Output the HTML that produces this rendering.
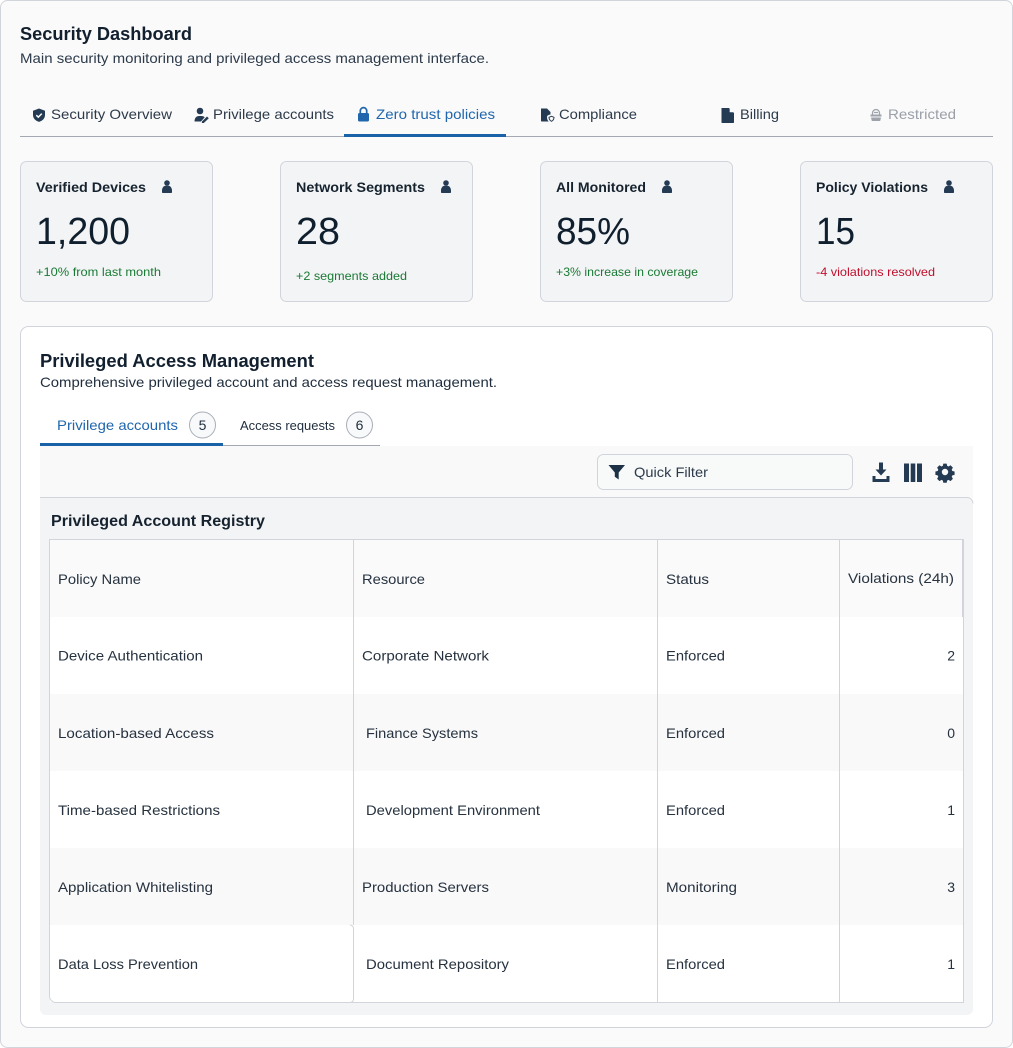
<!DOCTYPE html>
<html lang="en">
<head>
<meta charset="utf-8">
<title>Security Dashboard</title>
<style>
html,body{margin:0;padding:0;background:#fff;width:1013px;height:1048px;overflow:hidden}
svg{display:block}
text{font-family:"Liberation Sans",Arial,sans-serif;font-size:14px;fill:#1f2d3d}
.h1{font-size:18px;font-weight:700;fill:#111f2e}
.sub{fill:#2c3a4a}
.tab{fill:#2c3a4a}
.blue{fill:#1f66ad}
.ct{font-weight:700;fill:#16232f}
.val{font-size:38px;fill:#0f1f2e}
.note{font-size:12px}
.gr{fill:#1a7a34}
.rd{fill:#c20f2c}
.cell{fill:#26323f}
</style>
</head>
<body>
<svg width="1013" height="1048" viewBox="0 0 1013 1048" xmlns="http://www.w3.org/2000/svg">
<rect x="0.5" y="0.5" width="1012" height="1047" rx="7" fill="#fafafa" stroke="#d1d5db"/>

<text x="20" y="40" class="h1" lengthAdjust="spacingAndGlyphs" textLength="172">Security Dashboard</text>
<text x="20" y="63" class="sub" lengthAdjust="spacingAndGlyphs" textLength="469">Main security monitoring and privileged access management interface.</text>

<!-- tabs -->
<rect x="20" y="136" width="973" height="1" fill="#a3a8b3"/>
<rect x="344" y="134" width="162" height="3" fill="#1a62a8"/>
<path fill="#243b53" d="M39 108.500l6 2.200v4.200c0 3.600-2.600 5.900-6 7-3.400-1.100-6-3.400-6-7v-4.200z"/>
<path fill="none" stroke="#fafafa" stroke-width="1.500" d="M36.300 115.200l2 2 3.500-3.600"/>
<text x="51" y="119" class="tab" lengthAdjust="spacingAndGlyphs" textLength="121">Security Overview</text>
<circle cx="200" cy="111" r="3.300" fill="#243b53"/>
<path fill="#243b53" d="M194.500 121.500c0-3.700 2-5.500 4.500-5.500h2.500c1.500 0 2.500.5 3.200 1.300l-3.700 4.200z"/>
<path fill="#243b53" d="M202 121.500l5-5 1.800 1.800-5 4.700h-2z"/>
<text x="213" y="119" class="tab" lengthAdjust="spacingAndGlyphs" textLength="121">Privilege accounts</text>
<path fill="none" stroke="#1f66ad" stroke-width="1.700" d="M360.300 113v-2.200a3.200 3.200 0 0 1 6.400 0v2.200"/>
<rect x="358" y="113" width="11" height="8.500" rx="1.500" fill="#1f66ad"/>
<text x="376" y="119" class="tab blue" lengthAdjust="spacingAndGlyphs" textLength="119">Zero trust policies</text>
<path fill="#243b53" d="M541 108.500h6l3.500 3.500v2.500c-1.800.2-3.500 1-3.500 2.500 0 2 .5 3.500 1.700 4.500H541.800a.8.8 0 0 1-.8-.8z"/>
<path fill="none" stroke="#243b53" stroke-width="1" d="M551.500 116.300l2.500 1c0 2-1 3.300-2.500 4-1.500-.7-2.500-2-2.500-4z"/>
<text x="559" y="119" class="tab" lengthAdjust="spacingAndGlyphs" textLength="78">Compliance</text>
<path fill="#243b53" d="M721.500 108h7.500l5 5v9.200a.8.800 0 0 1-.8.800H722.300a.8.800 0 0 1-.8-.8z"/>
<path fill="#fafafa" d="M729.700 108l4.300 4.300h-4.300z"/>
<text x="740" y="119" class="tab" lengthAdjust="spacingAndGlyphs" textLength="39">Billing</text>
<path fill="none" stroke="#9ea3ab" stroke-width="1.300" d="M872.500 114.500v-1.500a3.500 3.500 0 0 1 7 0v1.500M874 112.500h4"/>
<rect x="870.500" y="114.500" width="11" height="2" fill="#9ea3ab"/>
<path fill="#9ea3ab" d="M871 117.500h10l-.8 3.500h-8.400z"/>
<text x="888" y="119" style="fill:#9a9fa8" lengthAdjust="spacingAndGlyphs" textLength="68">Restricted</text>

<!-- cards -->
<g fill="#f3f4f6" stroke="#d1d5db">
<rect x="20.500" y="161.500" width="192" height="140" rx="6"/>
<rect x="280.500" y="161.500" width="192" height="140" rx="6"/>
<rect x="540.500" y="161.500" width="192" height="140" rx="6"/>
<rect x="800.500" y="161.500" width="192" height="140" rx="6"/>
</g>
<defs>
<g id="u"><circle cx="5" cy="3" r="2.800" fill="#243b53"/><path d="M0 12.300v-1.800c0-2.600 1.800-4.700 3.500-4.700h3c1.700 0 3.500 2.100 3.500 4.700v1.800a.7.700 0 0 1-.7.700H.7a.7.700 0 0 1-.7-.7z" fill="#243b53"/></g>
</defs>
<text x="36" y="192" class="ct" lengthAdjust="spacingAndGlyphs" textLength="110">Verified Devices</text>
<use href="#u" x="162" y="180"/>
<text x="36" y="244" class="val" lengthAdjust="spacingAndGlyphs" textLength="94">1,200</text>
<text x="36" y="276" class="note gr" lengthAdjust="spacingAndGlyphs" textLength="125">+10% from last month</text>

<text x="296" y="192" class="ct" lengthAdjust="spacingAndGlyphs" textLength="129">Network Segments</text>
<use href="#u" x="441" y="180"/>
<text x="296" y="244" class="val" lengthAdjust="spacingAndGlyphs" textLength="44">28</text>
<text x="296" y="280" class="note gr" lengthAdjust="spacingAndGlyphs" textLength="111">+2 segments added</text>

<text x="556" y="192" class="ct" lengthAdjust="spacingAndGlyphs" textLength="90">All Monitored</text>
<use href="#u" x="662" y="180"/>
<text x="556" y="244" class="val" lengthAdjust="spacingAndGlyphs" textLength="74">85%</text>
<text x="556" y="276" class="note gr" lengthAdjust="spacingAndGlyphs" textLength="142">+3% increase in coverage</text>

<text x="816" y="192" class="ct" lengthAdjust="spacingAndGlyphs" textLength="112">Policy Violations</text>
<use href="#u" x="944" y="180"/>
<text x="816" y="244" class="val" lengthAdjust="spacingAndGlyphs" textLength="39">15</text>
<text x="816" y="276" class="note rd" lengthAdjust="spacingAndGlyphs" textLength="119">-4 violations resolved</text>

<!-- panel -->
<rect x="20.500" y="326.500" width="972" height="701" rx="8" fill="#fff" stroke="#d1d5db"/>
<text x="40" y="367" class="h1" lengthAdjust="spacingAndGlyphs" textLength="274">Privileged Access Management</text>
<text x="40" y="387" class="sub" style="fill:#1f2d3d" lengthAdjust="spacingAndGlyphs" textLength="457">Comprehensive privileged account and access request management.</text>

<rect x="223" y="445" width="157" height="1" fill="#a3a8b3"/>
<rect x="40" y="443" width="183" height="3" fill="#1a62a8"/>
<text x="57" y="430" class="blue" lengthAdjust="spacingAndGlyphs" textLength="121">Privilege accounts</text>
<circle cx="202.500" cy="425" r="13" fill="#f8f9fa" stroke="#a9aeb7"/>
<text x="202.500" y="430" text-anchor="middle">5</text>
<text x="240" y="430" style="font-size:12.500px" lengthAdjust="spacingAndGlyphs" textLength="95">Access requests</text>
<circle cx="359.500" cy="425" r="13" fill="#f8f9fa" stroke="#a9aeb7"/>
<text x="359.500" y="430" text-anchor="middle">6</text>

<!-- toolbar -->
<rect x="40" y="446" width="933" height="52" fill="#f9f9fa"/>
<rect x="597.500" y="454.500" width="255" height="35" rx="6" fill="#f8f9f9" stroke="#d1d5db"/>
<path fill="#1d3247" d="M608.500 465h16.500l-6.300 7.500v7l-3.900 -2.800v-4.200z"/>
<text x="634" y="477" lengthAdjust="spacingAndGlyphs" textLength="74" style="fill:#2c3a4a">Quick Filter</text>
<path fill="#243b53" d="M879 462.500h4v7h3.500l-5.500 6-5.500-6h3.500z"/>
<path fill="#243b53" d="M872.500 476h3v3h11v-3h3v6h-17z"/>
<path fill="#243b53" d="M904 463.500h5v18.500h-5zM910.700 463.500h4.600v18.500h-4.600zM917 463.500h5v18.500h-5z"/>
<g transform="translate(945 472) scale(.84) translate(-945 -472)">
<path fill="#243b53" fill-rule="evenodd" d="M943 462h4l.6 2.700 1.600.7 2.400-1.400 2.800 2.800-1.400 2.400.7 1.600 2.700.6v4l-2.700.6-.7 1.600 1.400 2.400-2.800 2.800-2.400-1.400-1.600.7-.6 2.700h-4l-.6-2.700-1.600-.7-2.400 1.400-2.800-2.800 1.400-2.400-.7-1.600-2.700-.6v-4l2.700-.6.7-1.600-1.400-2.400 2.800-2.800 2.400 1.400 1.600-.7zM945 468.200a3.800 3.800 0 1 0 0 7.600 3.800 3.800 0 0 0 0-7.600z"/>
</g>

<!-- registry -->
<path fill="#f3f4f6" d="M40 497.500H967a6 6 0 0 1 6 6V1009a6 6 0 0 1-6 6H46a6 6 0 0 1-6-6z"/>
<path fill="none" stroke="#d1d5db" d="M40 497.500H967a6 6 0 0 1 6 6"/>
<text x="51" y="526" class="ct" style="font-size:16px" lengthAdjust="spacingAndGlyphs" textLength="214">Privileged Account Registry</text>

<!-- table -->
<rect x="50" y="540" width="914" height="77" fill="#fafafa"/>
<rect x="50" y="617" width="914" height="77" fill="#fff"/>
<rect x="50" y="694" width="914" height="77" fill="#f9f9fa"/>
<rect x="50" y="771" width="914" height="77" fill="#fff"/>
<rect x="50" y="848" width="914" height="77" fill="#f9f9fa"/>
<rect x="50" y="925" width="914" height="77" fill="#fff"/>
<path fill="none" stroke="#d1d5db" d="M49.500 996V539.500H963.500V1002.500H56a6.500 6.500 0 0 1-6.500-6.500z"/>
<rect x="962" y="540" width="2" height="77" fill="#d1d5db"/>
<path fill="none" stroke="#d1d5db" d="M353.500 540V925M657.500 540V1002M839.500 540V1002"/>
<path fill="none" stroke="#d1d5db" d="M350 925a3.500 3.500 0 0 1 3.500 3.500V999a3.500 3.500 0 0 1-3.500 3.500"/>

<text x="58" y="584" class="cell" lengthAdjust="spacingAndGlyphs" textLength="83">Policy Name</text>
<text x="362" y="584" class="cell" lengthAdjust="spacingAndGlyphs" textLength="63">Resource</text>
<text x="666" y="584" class="cell" lengthAdjust="spacingAndGlyphs" textLength="43">Status</text>
<text x="848" y="583" class="cell" lengthAdjust="spacingAndGlyphs" textLength="106">Violations (24h)</text>

<text x="58" y="660.500" class="cell" lengthAdjust="spacingAndGlyphs" textLength="145">Device Authentication</text>
<text x="362" y="660.500" class="cell" lengthAdjust="spacingAndGlyphs" textLength="127">Corporate Network</text>
<text x="666" y="660.500" class="cell" lengthAdjust="spacingAndGlyphs" textLength="59">Enforced</text>
<text x="955" y="660.500" class="cell" text-anchor="end">2</text>

<text x="58" y="738" class="cell" lengthAdjust="spacingAndGlyphs" textLength="156">Location-based Access</text>
<text x="366" y="738" class="cell" lengthAdjust="spacingAndGlyphs" textLength="112">Finance Systems</text>
<text x="666" y="738" class="cell" lengthAdjust="spacingAndGlyphs" textLength="59">Enforced</text>
<text x="955" y="738" class="cell" text-anchor="end">0</text>

<text x="58" y="815" class="cell" lengthAdjust="spacingAndGlyphs" textLength="162">Time-based Restrictions</text>
<text x="366" y="815" class="cell" lengthAdjust="spacingAndGlyphs" textLength="174">Development Environment</text>
<text x="666" y="815" class="cell" lengthAdjust="spacingAndGlyphs" textLength="59">Enforced</text>
<text x="955" y="815" class="cell" text-anchor="end">1</text>

<text x="58" y="892" class="cell" lengthAdjust="spacingAndGlyphs" textLength="155">Application Whitelisting</text>
<text x="362" y="892" class="cell" lengthAdjust="spacingAndGlyphs" textLength="127">Production Servers</text>
<text x="666" y="892" class="cell" lengthAdjust="spacingAndGlyphs" textLength="71">Monitoring</text>
<text x="955" y="892" class="cell" text-anchor="end">3</text>

<text x="58" y="969" class="cell" lengthAdjust="spacingAndGlyphs" textLength="140">Data Loss Prevention</text>
<text x="366" y="969" class="cell" lengthAdjust="spacingAndGlyphs" textLength="143">Document Repository</text>
<text x="666" y="969" class="cell" lengthAdjust="spacingAndGlyphs" textLength="59">Enforced</text>
<text x="955" y="969" class="cell" text-anchor="end">1</text>
</svg>
</body>
</html>
